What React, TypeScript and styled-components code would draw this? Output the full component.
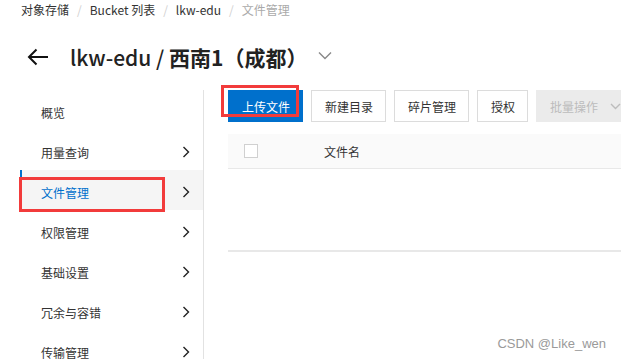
import React from 'react';
import styled, { createGlobalStyle } from 'styled-components';

const GlobalStyle = createGlobalStyle`
  html, body {
    margin: 0;
    padding: 0;
    background: #ffffff;
    overflow: hidden;
  }
  body {
    font-family: "Noto Sans CJK SC", "Liberation Sans", sans-serif;
    color: #333333;
  }
`;

const Page = styled.div`
  position: relative;
  width: 621px;
  height: 359px;
  overflow: hidden;
  padding-left: 20px;
  box-sizing: border-box;
`;

const Crumbs = styled.div`
  display: flex;
  align-items: center;
  height: 18px;
  padding-left: 1px;
  font-size: 12px;
`;

const Crumb = styled.span<{ $current?: boolean }>`
  color: ${({ $current }) => ($current ? '#aaaaaa' : '#333333')};
  white-space: nowrap;
`;

const CrumbSep = styled.span`
  color: #d0d0d0;
  margin: 0 8px;
`;

const TitleRow = styled.div`
  display: flex;
  align-items: center;
  height: 36px;
  margin-top: 21px;
  padding-left: 7px;
`;

const BackArrow = styled.svg`
  width: 22px;
  height: 18px;
  margin-right: 21px;
`;

const Title = styled.h1`
  margin: 0;
  font-size: 21px;
  font-weight: 500;
  color: #222222;
  white-space: nowrap;
`;

const Bold = styled.span`
  font-weight: 700;
`;

const TitleCaret = styled.svg`
  width: 14px;
  height: 9px;
  margin-left: 11px;
  margin-top: -3px;
`;

const Body = styled.div`
  display: flex;
  margin-top: 15px;
`;

const Side = styled.nav`
  width: 183px;
  flex: none;
  border-right: 1px solid #e2e2e2;
  height: 290px;
`;

const NavRow = styled.div<{ $active?: boolean }>`
  display: flex;
  align-items: center;
  justify-content: space-between;
  height: 40px;
  padding: 4px 13px 0 19px;
  box-sizing: border-box;
  font-size: 12px;
  color: ${({ $active }) => ($active ? '#0070cc' : '#333333')};
  background: ${({ $active }) => ($active ? '#f5f5f5' : 'transparent')};
  border-left: 2px solid ${({ $active }) => ($active ? '#0070cc' : 'transparent')};
`;

const Chevron = styled.svg`
  width: 8px;
  height: 12px;
`;

const Main = styled.div`
  flex: 1;
  margin-left: 24px;
  min-width: 0;
`;

const Toolbar = styled.div`
  display: flex;
  gap: 8px;
  white-space: nowrap;
`;

const Btn = styled.button<{ $kind?: 'primary' | 'disabled' }>`
  display: flex;
  align-items: center;
  flex: none;
  height: 32px;
  padding: 0 12px 0 13px;
  border: 1px solid
    ${({ $kind }) => ($kind === 'primary' ? '#0070cc' : $kind === 'disabled' ? '#ebebeb' : '#dcdcdc')};
  background: ${({ $kind }) => ($kind === 'primary' ? '#0070cc' : $kind === 'disabled' ? '#ebebeb' : '#ffffff')};
  color: ${({ $kind }) => ($kind === 'primary' ? '#ffffff' : $kind === 'disabled' ? '#bcbcbc' : '#333333')};
  font-family: inherit;
  font-size: 12px;
  border-radius: 0;
  cursor: pointer;
`;

const BtnCaret = styled.svg`
  width: 11px;
  height: 7px;
  margin-left: 12px;
`;

const TableHead = styled.div`
  display: flex;
  align-items: center;
  height: 34px;
  margin-top: 12px;
  background: #fafafa;
  border-bottom: 1px solid #e8e8e8;
  font-size: 12px;
  color: #333333;
`;

const Check = styled.span`
  width: 12px;
  height: 12px;
  border: 1px solid #d0d0d0;
  background: #ffffff;
  margin-left: 16px;
  margin-right: 66px;
`;

const TableBody = styled.div`
  height: 81px;
  border-bottom: 2px solid #e8e8e8;
`;

const Mark = styled.div<{ $x: number; $y: number; $w: number; $h: number }>`
  position: absolute;
  left: ${({ $x }) => $x}px;
  top: ${({ $y }) => $y}px;
  width: ${({ $w }) => $w}px;
  height: ${({ $h }) => $h}px;
  border: 3px solid #f23b3b;
  box-sizing: border-box;
  pointer-events: none;
`;

const Watermark = styled.div`
  position: absolute;
  right: 15px;
  bottom: 8px;
  font-family: "Liberation Sans", Arial, sans-serif;
  font-size: 13px;
  color: #9a9a9a;
`;

const navItems = ['概览', '用量查询', '文件管理', '权限管理', '基础设置', '冗余与容错', '传输管理'];

const RightChevron = () => (
  <Chevron viewBox="0 0 8 12">
    <path d="M1.5 1 L6.5 6 L1.5 11" fill="none" stroke="#222" strokeWidth="1.4" />
  </Chevron>
);

export default function App() {
  return (
    <Page>
      <GlobalStyle />
      <Crumbs>
        <Crumb>对象存储</Crumb>
        <CrumbSep>/</CrumbSep>
        <Crumb>Bucket 列表</Crumb>
        <CrumbSep>/</CrumbSep>
        <Crumb>lkw-edu</Crumb>
        <CrumbSep>/</CrumbSep>
        <Crumb $current>文件管理</Crumb>
      </Crumbs>

      <TitleRow>
        <BackArrow viewBox="0 0 22 18">
          <path d="M21 9 H2 M9.5 1.5 L2 9 L9.5 16.5" fill="none" stroke="#111" strokeWidth="2" />
        </BackArrow>
        <Title>
          lkw-edu / <Bold>西南1（成都）</Bold>
        </Title>
        <TitleCaret viewBox="0 0 14 9">
          <path d="M1 1.5 L7 7.5 L13 1.5" fill="none" stroke="#888" strokeWidth="1.4" />
        </TitleCaret>
      </TitleRow>

      <Body>
        <Side>
          {navItems.map((name, i) => (
            <NavRow key={name} $active={i === 2}>
              <span>{name}</span>
              {i > 0 && <RightChevron />}
            </NavRow>
          ))}
        </Side>
        <Main>
          <Toolbar>
            <Btn $kind="primary">上传文件</Btn>
            <Btn>新建目录</Btn>
            <Btn>碎片管理</Btn>
            <Btn>授权</Btn>
            <Btn $kind="disabled">
              批量操作
              <BtnCaret viewBox="0 0 11 7">
                <path d="M1 1 L5.5 5.5 L10 1" fill="none" stroke="#bcbcbc" strokeWidth="1.4" />
              </BtnCaret>
            </Btn>
          </Toolbar>
          <TableHead>
            <Check />
            文件名
          </TableHead>
          <TableBody />
        </Main>
      </Body>

      <Mark $x={221} $y={85} $w={78} $h={32} />
      <Mark $x={19} $y={177} $w={146} $h={35} />
      <Watermark>CSDN @Like_wen</Watermark>
    </Page>
  );
}
